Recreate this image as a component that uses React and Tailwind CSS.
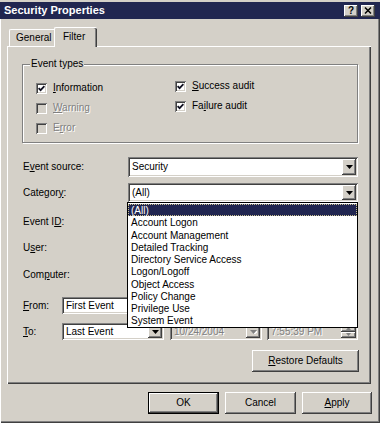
import React from "react";

const RAISED =
  "shadow-[inset_-1px_-1px_0_#404040,inset_1px_1px_0_#ffffff,inset_-2px_-2px_0_#808080,inset_2px_2px_0_#d4d0c8]";
const SUNKEN =
  "shadow-[inset_1px_1px_0_#808080,inset_-1px_-1px_0_#ffffff,inset_2px_2px_0_#404040,inset_-2px_-2px_0_#d4d0c8]";
const DIS = "text-[#808080] [text-shadow:1px_1px_0_#ffffff]";

function Check({ checked, disabled }) {
  return (
    <span
      className={`w-[11px] h-[11px] shrink-0 flex items-center justify-center ${
        disabled ? "bg-[#d4d0c8]" : "bg-white"
      } ${SUNKEN}`}
    >
      {checked && (
        <svg width="7" height="7" viewBox="0 0 7 7">
          <path d="M0.6 3.2 L2.6 5.2 L6.4 1.2" stroke="#101020" strokeWidth="1.7" fill="none" />
        </svg>
      )}
    </span>
  );
}

function Tri({ disabled }) {
  return (
    <svg width="7" height="4" viewBox="0 0 7 4">
      {disabled && <polygon points="1,1 8,1 4.5,5" fill="#ffffff" />}
      <polygon points="0,0 7,0 3.5,4" fill={disabled ? "#808080" : "#000"} />
    </svg>
  );
}

function DropBtn({ disabled }) {
  return (
    <span className={`w-[14px] h-full bg-[#d4d0c8] flex items-center justify-center ${RAISED}`}>
      <Tri disabled={disabled} />
    </span>
  );
}

function Combo({ value, className, disabled }) {
  return (
    <div className={`${SUNKEN} ${disabled ? "bg-[#d4d0c8]" : "bg-white"} flex p-[2px] ${className}`}>
      <span className={`flex-1 flex items-center pl-[2px] ${disabled ? DIS : ""}`}>{value}</span>
      <DropBtn disabled={disabled} />
    </div>
  );
}

function Btn({ children, className, def }) {
  return (
    <div
      className={`flex items-center justify-center bg-[#d4d0c8] ${
        def
          ? "shadow-[inset_0_0_0_1px_#000000,inset_-2px_-2px_0_#404040,inset_2px_2px_0_#ffffff,inset_-3px_-3px_0_#808080]"
          : RAISED
      } ${className}`}
    >
      {children}
    </div>
  );
}

const U = ({ children }) => <span className="underline underline-offset-[1px]">{children}</span>;

export default function App() {
  const items = [
    "(All)",
    "Account Logon",
    "Account Management",
    "Detailed Tracking",
    "Directory Service Access",
    "Logon/Logoff",
    "Object Access",
    "Policy Change",
    "Privilege Use",
    "System Event",
  ];
  return (
    <div className="w-[380px] h-[423px] bg-[#d4d0c8] relative overflow-hidden font-['Liberation_Sans',Arial,sans-serif] text-[10px] text-black leading-none shadow-[inset_1px_0_0_#ffffff,inset_-1px_-1px_0_#404040,inset_-2px_-2px_0_#808080]">
      <div className="h-[2px] bg-[#d4d0c8]" />
      {/* title bar */}
      <div className="h-[17px] bg-[#212650] flex items-center pl-[4px] pr-[5px]">
        <span className="text-white font-bold text-[11px]">Security Properties</span>
        <div className="ml-auto flex gap-[3px]">
          <div className={`w-[14px] h-[12px] bg-[#d4d0c8] flex items-center justify-center ${RAISED}`}>
            <span className="font-bold text-[10px] leading-none">?</span>
          </div>
          <div className={`w-[14px] h-[12px] bg-[#d4d0c8] flex items-center justify-center ${RAISED}`}>
            <svg width="8" height="7" viewBox="0 0 8 7">
              <path d="M1 0.5 L7 6.5 M7 0.5 L1 6.5" stroke="#000" strokeWidth="1.5" />
            </svg>
          </div>
        </div>
      </div>

      {/* tabs */}
      <div className="mt-[8px] h-[19px] flex items-end pl-[9px]">
        <div className="w-[47px] h-[17px] border-l border-t border-white rounded-tl-[2px] shadow-[inset_-1px_0_0_#808080] flex items-center pl-[6px]">
          General
        </div>
        <div className="relative z-10 w-[43px] h-[20px] -ml-[2px] -mb-[1px] bg-[#d4d0c8] border-l border-t border-white rounded-t-[2px] shadow-[inset_-1px_0_0_#404040,inset_-2px_0_0_#808080] flex items-center pl-[8px] pb-[1px]">
          Filter
        </div>
      </div>

      {/* panel */}
      <div className="ml-[7px] w-[364px] h-[338px] bg-[#d4d0c8] shadow-[inset_1px_1px_0_#ffffff,inset_-1px_-1px_0_#404040,inset_-2px_-2px_0_#808080] flex flex-col">
        {/* group */}
        <div className="mt-[18px] ml-[15px] w-[336px] h-[79px] relative border border-[#808080] shadow-[1px_1px_0_#ffffff,inset_1px_1px_0_#ffffff] flex">
          <span className="absolute -top-[6px] left-[7px] px-[1px] bg-[#d4d0c8]">Event types</span>
          <div className="pl-[13px] pt-[13px] w-[152px] flex flex-col">
            <div className="h-[20px] flex items-center gap-[6px]">
              <Check checked />
              <span>
                <U>I</U>nformation
              </span>
            </div>
            <div className="h-[20px] flex items-center gap-[6px]">
              <Check disabled />
              <span className={DIS}>
                <U>W</U>arning
              </span>
            </div>
            <div className="h-[20px] flex items-center gap-[6px]">
              <Check disabled />
              <span className={DIS}>
                E<U>r</U>ror
              </span>
            </div>
          </div>
          <div className="pt-[11px] flex flex-col">
            <div className="h-[20px] flex items-center gap-[6px]">
              <Check checked />
              <span>
                <U>S</U>uccess audit
              </span>
            </div>
            <div className="h-[20px] flex items-center gap-[6px]">
              <Check checked />
              <span>
                Fa<U>i</U>lure audit
              </span>
            </div>
          </div>
        </div>

        {/* form rows */}
        <div className="ml-[16px] mt-[14px] h-[20px] flex items-center">
          <span className="w-[105px]">
            E<U>v</U>ent source:
          </span>
          <Combo value="Security" className="w-[230px] h-[20px]" />
        </div>
        <div className="ml-[16px] mt-[6px] h-[19px] flex items-center">
          <span className="w-[105px]">
            Categor<U>y</U>:
          </span>
          <Combo value="(All)" className="w-[230px] h-[19px]" />
        </div>
        <div className="ml-[16px] mt-[10px] h-[20px] flex items-center">
          <span className="w-[105px]">
            Event I<U>D</U>:
          </span>
          <div className={`w-[230px] h-[20px] bg-white ${SUNKEN}`} />
        </div>
        <div className="ml-[16px] mt-[6px] h-[20px] flex items-center">
          <span className="w-[105px]">
            U<U>s</U>er:
          </span>
          <div className={`w-[230px] h-[20px] bg-white ${SUNKEN}`} />
        </div>
        <div className="ml-[16px] mt-[7px] h-[20px] flex items-center">
          <span className="w-[105px]">
            Com<U>p</U>uter:
          </span>
          <div className={`w-[230px] h-[20px] bg-white ${SUNKEN}`} />
        </div>
        <div className="ml-[16px] mt-[12px] h-[17px] flex items-center">
          <span className="w-[39px]">
            <U>F</U>rom:
          </span>
          <Combo value="First Event" className="w-[102px] h-[17px]" />
          <Combo value="" disabled className="ml-[6px] w-[92px] h-[17px]" />
          <Combo value="" disabled className="ml-[5px] w-[91px] h-[17px]" />
        </div>
        <div className="ml-[16px] mt-[9px] h-[17px] flex items-center">
          <span className="w-[39px]">
            <U>T</U>o:
          </span>
          <Combo value="Last Event" className="w-[102px] h-[17px]" />
          <Combo value="10/24/2004" disabled className="ml-[6px] w-[92px] h-[17px]" />
          <div className={`ml-[5px] w-[91px] h-[17px] bg-[#d4d0c8] flex p-[2px] ${SUNKEN}`}>
            <span className={`flex-1 flex items-center pl-[2px] ${DIS}`}>7:55:39 PM</span>
            <div className="w-[15px] flex flex-col">
              <span className={`flex-1 flex items-center justify-center ${RAISED}`}>
                <svg width="5" height="3" viewBox="0 0 5 3">
                  <polygon points="0,3 5,3 2.5,0" fill="#808080" />
                </svg>
              </span>
              <span className={`flex-1 flex items-center justify-center ${RAISED}`}>
                <svg width="5" height="3" viewBox="0 0 5 3">
                  <polygon points="0,0 5,0 2.5,3" fill="#808080" />
                </svg>
              </span>
            </div>
          </div>
        </div>
        <div className="mt-[10px] flex justify-end pr-[12px]">
          <Btn className="w-[107px] h-[22px]">
            <span>
              <U>R</U>estore Defaults
            </span>
          </Btn>
        </div>
      </div>

      {/* dialog buttons */}
      <div className="mt-[8px] flex justify-end gap-[6px] pr-[8px]">
        <Btn def className="w-[71px] h-[22px]">
          OK
        </Btn>
        <Btn className="w-[71px] h-[22px]">Cancel</Btn>
        <Btn className="w-[70px] h-[22px]">
          <span>
            <U>A</U>pply
          </span>
        </Btn>
      </div>

      {/* open category list */}
      <div className="absolute left-[127px] top-[202px] w-[231px] bg-white border border-black pt-[1px] z-20">
        {items.map((t, i) => (
          <div
            key={t}
            className={`h-[12.25px] leading-[12.25px] pl-[2px] ${
              i === 0 ? "bg-[#212650] text-white border border-dotted border-[#c8c090]" : "border border-transparent"
            }`}
          >
            {t}
          </div>
        ))}
      </div>
    </div>
  );
}
